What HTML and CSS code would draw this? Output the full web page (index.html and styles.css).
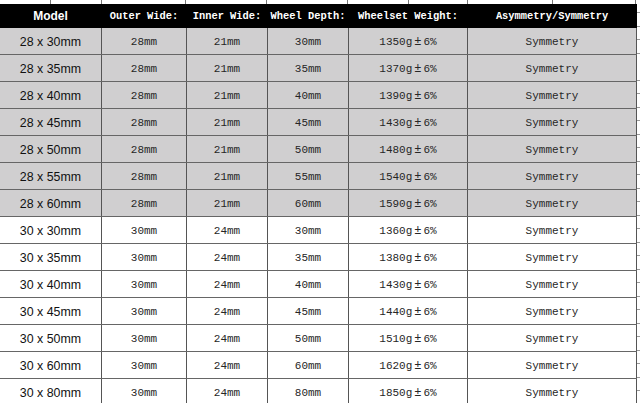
FILE: index.html
```html
<!DOCTYPE html>
<html>
<head>
<meta charset="utf-8">
<link rel="stylesheet" href="styles.css">
</head>
<body>
<div class="page">
  <div class="main">
    <div class="topstrip">
      <span class="seg w51"></span><span class="seg w51"></span><span class="seg w84"></span><span class="seg w81"></span><span class="seg w81"></span><span class="seg w61"></span><span class="seg w59"></span><span class="seg w85"></span><span class="seg w83"></span>
    </div>
    <div class="table">
      <div class="row head">
        <div class="cell model">Model</div>
        <div class="cell">Outer Wide:</div>
        <div class="cell">Inner Wide:</div>
        <div class="cell">Wheel Depth:</div>
        <div class="cell">Wheelset Weight:</div>
        <div class="cell">Asymmetry/Symmetry</div>
      </div>
      <div class="row grey"><div class="cell model">28 x 30mm</div><div class="cell">28mm</div><div class="cell">21mm</div><div class="cell">30mm</div><div class="cell">1350g<span class="pm">±</span>6%</div><div class="cell">Symmetry</div></div>
      <div class="row grey"><div class="cell model">28 x 35mm</div><div class="cell">28mm</div><div class="cell">21mm</div><div class="cell">35mm</div><div class="cell">1370g<span class="pm">±</span>6%</div><div class="cell">Symmetry</div></div>
      <div class="row grey"><div class="cell model">28 x 40mm</div><div class="cell">28mm</div><div class="cell">21mm</div><div class="cell">40mm</div><div class="cell">1390g<span class="pm">±</span>6%</div><div class="cell">Symmetry</div></div>
      <div class="row grey"><div class="cell model">28 x 45mm</div><div class="cell">28mm</div><div class="cell">21mm</div><div class="cell">45mm</div><div class="cell">1430g<span class="pm">±</span>6%</div><div class="cell">Symmetry</div></div>
      <div class="row grey"><div class="cell model">28 x 50mm</div><div class="cell">28mm</div><div class="cell">21mm</div><div class="cell">50mm</div><div class="cell">1480g<span class="pm">±</span>6%</div><div class="cell">Symmetry</div></div>
      <div class="row grey"><div class="cell model">28 x 55mm</div><div class="cell">28mm</div><div class="cell">21mm</div><div class="cell">55mm</div><div class="cell">1540g<span class="pm">±</span>6%</div><div class="cell">Symmetry</div></div>
      <div class="row grey"><div class="cell model">28 x 60mm</div><div class="cell">28mm</div><div class="cell">21mm</div><div class="cell">60mm</div><div class="cell">1590g<span class="pm">±</span>6%</div><div class="cell">Symmetry</div></div>
      <div class="row"><div class="cell model">30 x 30mm</div><div class="cell">30mm</div><div class="cell">24mm</div><div class="cell">30mm</div><div class="cell">1360g<span class="pm">±</span>6%</div><div class="cell">Symmetry</div></div>
      <div class="row"><div class="cell model">30 x 35mm</div><div class="cell">30mm</div><div class="cell">24mm</div><div class="cell">35mm</div><div class="cell">1380g<span class="pm">±</span>6%</div><div class="cell">Symmetry</div></div>
      <div class="row"><div class="cell model">30 x 40mm</div><div class="cell">30mm</div><div class="cell">24mm</div><div class="cell">40mm</div><div class="cell">1430g<span class="pm">±</span>6%</div><div class="cell">Symmetry</div></div>
      <div class="row"><div class="cell model">30 x 45mm</div><div class="cell">30mm</div><div class="cell">24mm</div><div class="cell">45mm</div><div class="cell">1440g<span class="pm">±</span>6%</div><div class="cell">Symmetry</div></div>
      <div class="row"><div class="cell model">30 x 50mm</div><div class="cell">30mm</div><div class="cell">24mm</div><div class="cell">50mm</div><div class="cell">1510g<span class="pm">±</span>6%</div><div class="cell">Symmetry</div></div>
      <div class="row"><div class="cell model">30 x 60mm</div><div class="cell">30mm</div><div class="cell">24mm</div><div class="cell">60mm</div><div class="cell">1620g<span class="pm">±</span>6%</div><div class="cell">Symmetry</div></div>
      <div class="row"><div class="cell model">30 x 80mm</div><div class="cell">30mm</div><div class="cell">24mm</div><div class="cell">80mm</div><div class="cell">1850g<span class="pm">±</span>6%</div><div class="cell">Symmetry</div></div>
    </div>
  </div>
  <div class="sidestrip"></div>
</div>
</body>
</html>
```

FILE: styles.css
```css
html, body {
  margin: 0;
  padding: 0;
  background: #ffffff;
}
body {
  width: 640px;
  height: 403px;
  overflow: hidden;
}
.page {
  display: flex;
  width: 640px;
  height: 403px;
  overflow: hidden;
}
.main {
  width: 637px;
  display: flex;
  flex-direction: column;
}
.topstrip {
  display: flex;
  height: 4px;
}
.seg {
  box-sizing: border-box;
  height: 4px;
  border-right: 1px solid #777;
}
.w51 { width: 51px; }
.w84 { width: 84px; }
.w81 { width: 81px; }
.w61 { width: 61px; }
.w59 { width: 59px; }
.w85 { width: 85px; }
.w83 { width: 83px; }
.table {
  display: flex;
  flex-direction: column;
}
.row {
  display: grid;
  grid-template-columns: 102px 85px 81px 81px 119px 169px;
  height: 27px;
  box-sizing: border-box;
  border-bottom: 1px solid #666;
  background: #ffffff;
}
.row.grey {
  background: #d0cfd0;
}
.row.head {
  height: 24px;
  background: #000000;
  border-bottom: 0;
}
.cell {
  box-sizing: border-box;
  border-right: 1px solid #555;
  display: flex;
  align-items: center;
  justify-content: center;
  font-family: "Liberation Mono", monospace;
  font-size: 11px;
  color: #262626;
  white-space: nowrap;
  padding-top: 1px;
}
.cell.model {
  font-family: "Liberation Sans", Arial, sans-serif;
  font-size: 12.4px;
  color: #111;
}
.head .cell {
  color: #ffffff;
  border-right-color: #000;
  font-weight: bold;
  font-size: 10.4px;
  padding-top: 0;
}
.head .cell.model {
  font-size: 12px;
}
.pm {
  margin: 0 2px;
  font-size: 12px;
}
.sidestrip {
  width: 3px;
  height: 403px;
  background: repeating-linear-gradient(to bottom, #ffffff 0, #ffffff 12.5px, #999 12.5px, #999 13.5px);
}
```
